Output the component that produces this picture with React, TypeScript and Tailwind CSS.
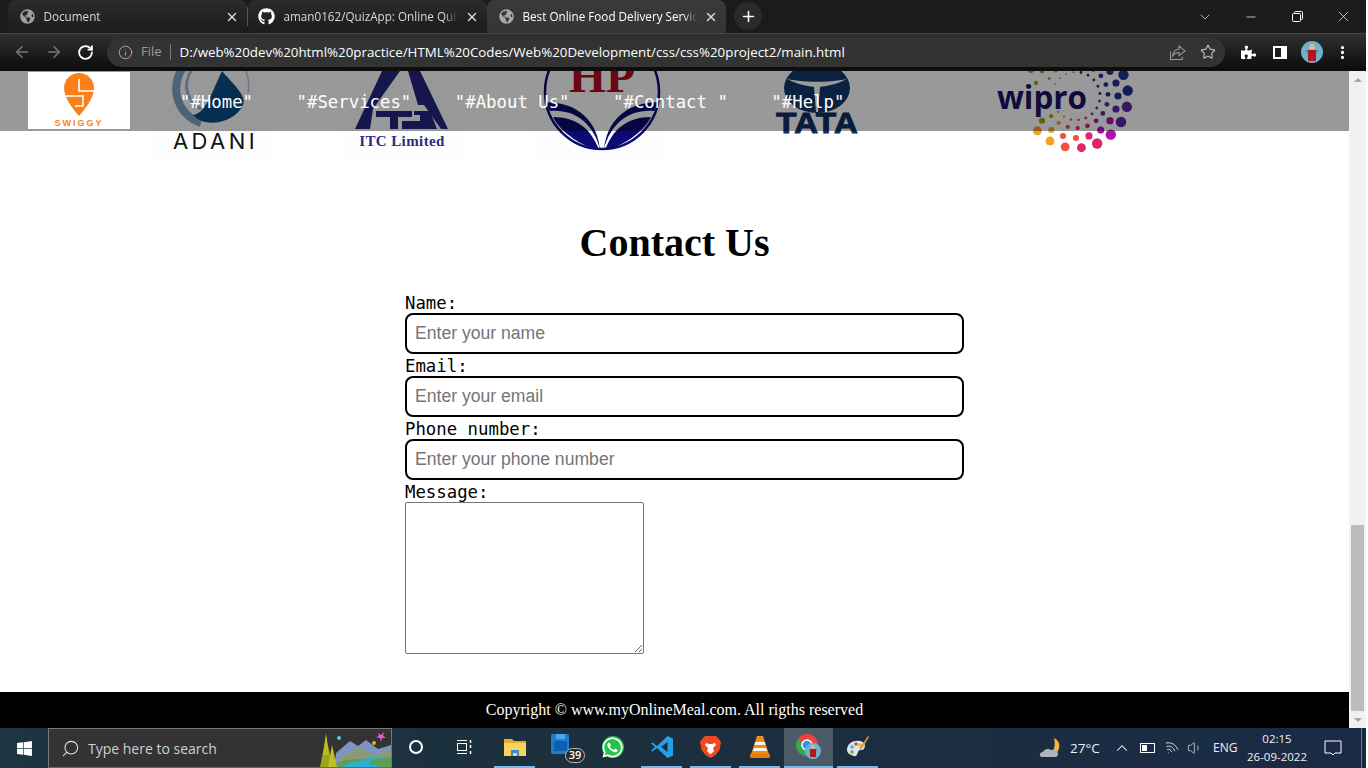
import { ArrowLeft, ArrowRight, RotateCw, Info, Star, X, Plus, ChevronDown, Minus, Search, ChevronUp, EllipsisVertical, Wifi, Volume1 } from "lucide-react";
import { FaGithub, FaGlobeAmericas, FaPuzzlePiece, FaWindows, FaWhatsapp } from "react-icons/fa";

const NAV_LINKS = ['"#Home"', '"#Services"', '"#About Us"', '"#Contact "', '"#Help"'];

const FIELDS = [
  { label: "Name:", placeholder: "Enter your name" },
  { label: "Email:", placeholder: "Enter your email" },
  { label: "Phone number:", placeholder: "Enter your phone number" },
];

function Tab({ title, icon, active }: { title: string; icon: React.ReactNode; active?: boolean }) {
  return (
    <div
      className={`flex h-[33px] w-[239px] items-center rounded-t-[8px] pl-[12px] pr-[8px] ${
        active ? "bg-gradient-to-b from-[#3a3a3a] to-[#343434] text-white" : "bg-gradient-to-b from-[#2b2b2b] to-[#1c1c1c] text-[#d8d8d8]"
      }`}
    >
      <span className="flex w-[23.500px] shrink-0 items-center">{icon}</span>
      <span className="flex-1 overflow-hidden whitespace-nowrap text-[11.700px] [mask-image:linear-gradient(to_right,black_92%,transparent)]">{title}</span>
      <X size={14} strokeWidth={2.4} className="ml-[7px] shrink-0 text-[#dcdcdc]" />
    </div>
  );
}

function BrowserChrome() {
  return (
    <header className="h-[71px] shrink-0 bg-[#0f0f0f] font-['Open_Sans',sans-serif]">
      <div className="flex h-[33px] items-end bg-[#1b1b1b] pl-[8px]">
        <Tab title="Document" icon={<FaGlobeAmericas size={15} className="text-[#a0a0a0]" />} />
        <div className="mb-[7px] h-[19px] w-px bg-[#555]" />
        <Tab title="aman0162/QuizApp: Online Quiz App" icon={<FaGithub size={17} className="-ml-[2px] text-white" />} />
        <Tab active title="Best Online Food Delivery Service in India" icon={<FaGlobeAmericas size={15} className="text-[#a8a8a8]" />} />
        <div className="mb-[3px] ml-[8px] flex h-[28px] w-[28px] items-center justify-center rounded-full bg-[#2a2a2a]">
          <Plus size={17} strokeWidth={2.2} className="text-white" />
        </div>
        <div className="flex-1" />
        <div className="mb-[8px] flex items-center text-white">
          <span className="flex w-[46px] justify-center"><ChevronDown size={16} strokeWidth={1} /></span>
          <span className="flex w-[46px] justify-center"><Minus size={14} strokeWidth={1.2} /></span>
          <span className="flex w-[46px] justify-center">
            <svg width="11" height="11" viewBox="0 0 11 11" fill="none" stroke="currentColor" strokeWidth="1">
              <rect x="0.5" y="2.5" width="8" height="8" rx="1" />
              <path d="M2.5 2.5V1.5a1 1 0 0 1 1-1h6a1 1 0 0 1 1 1v6a1 1 0 0 1-1 1h-1" />
            </svg>
          </span>
          <span className="flex w-[46px] justify-center"><X size={17} strokeWidth={1} /></span>
        </div>
      </div>
      <div className="flex h-[37px] items-center border-t border-[#454545] bg-gradient-to-b from-[#313131] to-[#0c0c0c] pl-[13px]">
        <ArrowLeft size={18} strokeWidth={2} className="text-[#777]" />
        <ArrowRight size={18} strokeWidth={2} className="ml-[14px] text-[#777]" />
        <RotateCw size={17} strokeWidth={2.6} className="ml-[14px] text-white" />
        <div className="ml-[13px] flex h-[29px] w-[1118px] items-center rounded-full bg-[#333333] pl-[11px] pr-[9px]">
          <Info size={15} strokeWidth={1.6} className="text-[#a8a8a8]" />
          <span className="ml-[8px] text-[13px] text-[#9a9a9a]">File</span>
          <div className="ml-[8px] h-[16px] w-px bg-[#777]" />
          <span className="ml-[9px] whitespace-nowrap text-[13.340px] text-white">D:/web%20dev%20html%20practice/HTML%20Codes/Web%20Development/css/css%20project2/main.html</span>
          <div className="flex-1" />
          <svg width="17" height="17" viewBox="0 0 16 16" fill="none" stroke="#9a9a9a" strokeWidth="1">
            <path d="M1.5 7v7.5h11V12" />
            <path d="M9.5 2v2.7C6 5 4 7.5 3.5 11 5.200 8.800 7 8 9.500 8v3L15 6.500z" />
          </svg>
          <Star size={16} strokeWidth={1.7} className="ml-[14px] text-[#bdbdbd]" />
        </div>
        <FaPuzzlePiece size={15} className="ml-[16px] text-white" />
        <div className="ml-[17px] h-[13px] w-[14px] border-[2px] border-r-[6px] border-white" />
        <svg width="22" height="22" viewBox="0 0 22 22" className="ml-[14px]">
          <circle cx="11" cy="11" r="11" fill="#6ab3c8" />
          <circle cx="11" cy="6" r="3" fill="#d8b8a0" />
          <path d="M5 10l3-1h6l3 1-2 1v9H7v-9z" fill="#b3161f" />
        </svg>
        <EllipsisVertical size={17} strokeWidth={2.6} className="ml-[11px] text-white" />
      </div>
    </header>
  );
}

function AdaniLogo() {
  return (
    <svg width="117" height="90" viewBox="0 0 117 90" className="shrink-0 bg-[#fdfdfd]">
      <path d="M32 -8 A 36 36 0 0 0 46 52" fill="none" stroke="#7ea6c9" strokeWidth="8" />
      <path d="M42 -6 A 26 26 0 0 0 46 38" fill="none" stroke="#9bbad6" strokeWidth="3" />
      <path d="M83 -12 A 38 38 0 0 1 93 22" fill="none" stroke="#b5c9da" strokeWidth="1.500" />
      <path d="M67 0 C 75 10 93 25 88 34 C 80 52 50 58 38 44 C 50 42 54 28 67 0Z" fill="#0c4c8a" />
      <text x="18" y="78" fontSize="22" letterSpacing="3.400" fill="#111" fontFamily="Inter, sans-serif">ADANI</text>
    </svg>
  );
}

function ItcLogo() {
  return (
    <svg width="124" height="90" viewBox="0 0 124 90" className="ml-[68px] shrink-0 bg-[#fdfefd]">
      <g fill="#232580">
        <path d="M42 0H60L33 38 30 58H15Z" />
        <path d="M68 0H80L108 58H101L84 34H78Z" />
        <path d="M36 40H72V46H58V58H50V46H36Z" />
        <path d="M62 50H80V44H74V40H90L97 58H62Z" />
      </g>
      <text x="62" y="75" textAnchor="middle" fontSize="15" fontWeight="700" letterSpacing="0.400" fill="#2c2b85" fontFamily="'Liberation Serif', serif">ITC Limited</text>
    </svg>
  );
}

function HpLogo() {
  return (
    <svg width="131" height="90" viewBox="0 0 131 90" className="ml-[69px] shrink-0 bg-[#fdfcff]">
      <circle cx="69" cy="21" r="57" fill="#fff" stroke="#0b0b73" strokeWidth="2.500" />
      <text x="69" y="21" textAnchor="middle" fontSize="46" fontWeight="700" textLength="66" lengthAdjust="spacingAndGlyphs" fill="#b10d1e" fontFamily="'Liberation Serif', serif">HP</text>
      <path d="M67 78 C 64 52 48 32 13 31 C 14 33 15 37 17 40 C 42 38 60 52 67 78Z" fill="#0b0b73" />
      <path d="M71 78 C 74 52 90 32 125 31 C 124 33 123 37 121 40 C 96 38 78 52 71 78Z" fill="#0b0b73" />
      <path d="M66 79 C 58 58 44 46 20 46 C 28 62 50 76 66 79Z" fill="#0b0b73" />
      <path d="M72 79 C 80 58 94 46 118 46 C 110 62 88 76 72 79Z" fill="#0b0b73" />
    </svg>
  );
}

function TataLogo() {
  return (
    <svg width="90" height="90" viewBox="0 0 90 90" className="ml-[106px] shrink-0">
      <ellipse cx="47" cy="17" rx="33" ry="25" fill="#12386e" />
      <path d="M15 7 C 28 14 38 15 44 16 L46 41 H48 L50 16 C 56 15 66 14 79 7 C 66 12 28 12 15 7Z" fill="#fff" />
      <text x="47" y="62" textAnchor="middle" fontSize="29" fontWeight="700" textLength="82" lengthAdjust="spacingAndGlyphs" stroke="#0d2f66" strokeWidth="0.800" fill="#0d2f66" fontFamily="'Liberation Sans', sans-serif">TATA</text>
    </svg>
  );
}

function dotColor(deg: number) {
  if (deg < -15) return "#79b13c";
  if (deg < 8) return "#1f9a8c";
  if (deg < 100) return "#1f3396";
  if (deg < 125) return "#5a2aa0";
  if (deg < 150) return "#b211b0";
  if (deg < 178) return "#e0246e";
  if (deg < 200) return "#f2513a";
  if (deg < 230) return "#f9a01d";
  return "#a8a01e";
}

const RINGS = [
  { r: 52, size: 5.2, shift: 0 },
  { r: 42, size: 3.6, shift: 6 },
  { r: 32, size: 2.4, shift: 3 },
  { r: 24, size: 1.4, shift: 0 },
];

function WiproLogo() {
  const dots = RINGS.flatMap((ring) =>
    Array.from({ length: 18 }, (_, i) => {
      const deg = -78 + ring.shift + i * 18;
      const rad = (deg * Math.PI) / 180;
      return { x: 86 + ring.r * Math.sin(rad), y: 25 - ring.r * Math.cos(rad), size: ring.size * (deg > 170 ? 0.85 : deg < 10 ? 0.6 : 1), fill: dotColor(deg) };
    })
  ).filter((d) => !(d.x < 98 && d.y > 13 && d.y < 41));
  return (
    <svg width="150" height="90" viewBox="0 0 150 90" className="ml-[130px] shrink-0">
      {dots.map((d, i) => (
        <circle key={i} cx={d.x} cy={d.y} r={d.size} fill={d.fill} />
      ))}
      <text x="7" y="38" fontSize="33" fontWeight="700" fill="#1c1166" textLength="90" lengthAdjust="spacingAndGlyphs" fontFamily="'Open Sans', sans-serif">wipro</text>
    </svg>
  );
}

function SwiggyLogo() {
  return (
    <div className="ml-[28px] -mt-[2px] flex h-[57px] w-[102px] shrink-0 flex-col items-center bg-white pt-[1px]">
      <svg width="30" height="44" viewBox="0 0 30 44">
        <path d="M15 0C6.700 0 0 6.700 0 15c0 10 9 21 15 28 6-7 15-18 15-28C30 6.700 23.300 0 15 0Z" fill="#fc8019" />
        <path d="M15 6V18H30M2 23H19V33H11" fill="none" stroke="#fff" strokeWidth="1.600" />
      </svg>
      <span className="mt-[1px] font-['Liberation_Sans',sans-serif] text-[9px] font-bold leading-[10px] tracking-[2px] text-[#fc8019]">SWIGGY</span>
    </div>
  );
}

function WebPage() {
  return (
    <main className="relative flex h-full min-w-0 flex-1 flex-col overflow-hidden bg-white">
      <div className="flex h-[90px] shrink-0 pl-[155px]">
        <AdaniLogo />
        <ItcLogo />
        <HpLogo />
        <TataLogo />
        <WiproLogo />
      </div>

      <nav className="absolute inset-x-0 top-0 flex h-[60px] items-center bg-black/40 font-['DejaVu_Sans_Mono',monospace] text-[17.330px] text-white">
        <SwiggyLogo />
        <div className="ml-[50px] flex gap-[43.500px] whitespace-pre pt-[3px]">
          {NAV_LINKS.map((link) => (
            <a key={link}>{link}</a>
          ))}
        </div>
      </nav>

      <h1 className="mt-[59px] text-center font-['Liberation_Serif',serif] text-[40px] font-bold leading-[46px] text-black">Contact Us</h1>

      <form className="mt-[27px] flex flex-1 flex-col pl-[405px] font-['DejaVu_Sans_Mono',monospace] text-[17.330px] leading-[20px] text-black">
        {FIELDS.map((field) => (
          <div key={field.label} className="mb-[2px]">
            <label className="block h-[20px]">{field.label}</label>
            <input
              placeholder={field.placeholder}
              className="block h-[41px] w-[559px] rounded-[8px] border-2 border-black bg-white px-[8px] font-['Liberation_Sans',sans-serif] text-[17.600px] placeholder:text-[#757575]"
            />
          </div>
        ))}
        <label className="block h-[20px]">Message:</label>
        <textarea className="block h-[152px] w-[239px] rounded-[2px] border border-[#767676] bg-white" />
      </form>

      <footer className="flex h-[36px] shrink-0 items-center justify-center bg-black font-['Liberation_Serif',serif] text-[16px] text-white">
        Copyright © www.myOnlineMeal.com. All rigths reserved
      </footer>
    </main>
  );
}

function Scrollbar() {
  return (
    <aside className="flex w-[17px] shrink-0 flex-col items-center bg-[#f1f1f1]">
      <div className="flex h-[17px] items-center justify-center">
        <div className="h-0 w-0 border-x-[4px] border-b-[4px] border-x-transparent border-b-[#a3a3a3]" />
      </div>
      <div className="flex-1" />
      <div className="h-[186px] w-[13px] bg-[#bcbcbc]" />
      <div className="flex h-[17px] items-center justify-center">
        <div className="h-0 w-0 border-x-[4px] border-t-[4px] border-x-transparent border-t-[#a3a3a3]" />
      </div>
    </aside>
  );
}

function SearchScene() {
  return (
    <svg width="77" height="38" viewBox="0 0 77 38" className="shrink-0">
      <path d="M22 24 L36 12 L44 17 L52 11 L64 20 L77 16 V38 H20Z" fill="#7e95c4" />
      <path d="M26 28 L44 18 L60 26 L77 20 V38 H26Z" fill="#8a9b7c" />
      <path d="M18 38 C 30 26 50 32 77 28 V38Z" fill="#5a9e5c" />
      <path d="M28 38 C 38 32 46 34 52 30 C 56 28 66 28 70 26 C 64 31 54 30 56 34 C 58 36 62 36 66 38Z" fill="#27b2d8" />
      <path d="M6 38 L12 8 L19 38Z" fill="#9aa51e" />
      <path d="M9 26 L12 4 L15 26Z" fill="#c2b91e" />
      <path d="M14 38 L18 16 L23 38Z" fill="#bfc023" />
      <circle cx="25" cy="9" r="2" fill="#4fd0e0" />
      <circle cx="60" cy="14" r="2" fill="#f5a623" />
      <path d="M64 4l3 2 3-3-1 4 3 2-4 0-1 4-1-4-4-1 3-1z" fill="#e85ce0" />
    </svg>
  );
}

function AppSlot({ children, running, active, narrow }: { children: React.ReactNode; running?: boolean; active?: boolean; narrow?: boolean }) {
  return (
    <div
      className={`relative flex h-[40px] shrink-0 items-center justify-center border-b-2 ${narrow ? "w-[48px]" : "w-[49px]"} ${
        active ? "border-[#76b9ed] bg-[#4b5a67]" : "border-transparent"
      }`}
    >
      {children}
      {running && !active && <span className="absolute inset-x-[4px] bottom-[-2px] h-[2px] bg-[#76b9ed]" />}
    </div>
  );
}

function Taskbar() {
  return (
    <footer className="flex h-[40px] shrink-0 items-center bg-gradient-to-r from-[#1c3540] via-[#1c2f3e] to-[#1a2a46] font-['Open_Sans',sans-serif] text-white">
      <div className="flex w-[48px] shrink-0 justify-center">
        <FaWindows size={17} />
      </div>
      <div className="flex h-[40px] w-[344px] shrink-0 items-center border border-[#777] border-b-[#666] bg-[#333333] pl-[12px]">
        <Search size={19} strokeWidth={1.3} className="-scale-x-100 text-[#e4e4e4]" />
        <span className="ml-[8px] flex-1 whitespace-nowrap text-[14px] text-[#d0d0d0]">Type here to search</span>
        <SearchScene />
      </div>
      <AppSlot narrow>
        <div className="h-[14px] w-[14px] rounded-full border-2 border-white" />
      </AppSlot>
      <AppSlot narrow>
        <svg width="16" height="16" viewBox="0 0 16 16" fill="none" stroke="#fff" strokeWidth="1">
          <path d="M1 1.500h10M1 14.500h10" />
          <rect x="1.500" y="4.500" width="9" height="7" />
          <path d="M14.500 1v3M14.500 6v3M14.500 12v3" strokeWidth="1.500" />
        </svg>
      </AppSlot>
      <div className="w-[2px] shrink-0" />
      <AppSlot running>
        <svg width="22" height="20" viewBox="0 0 22 20">
          <path d="M0 2h8l2 2h12v14H0z" fill="#e9a92e" />
          <path d="M0 6h22v13H0z" fill="#fbd35a" />
          <path d="M7 13h8v6h-2v-3H9v3H7z" fill="#2f8fd9" />
        </svg>
      </AppSlot>
      <AppSlot>
        <svg width="24" height="24" viewBox="0 0 24 24" className="-mt-[4px] -ml-[6px]">
          <rect x="2" y="1" width="18" height="20" rx="1.500" fill="#1f7cd0" />
          <rect x="7" y="1" width="9" height="5" fill="#4aa6ef" />
          <rect x="5" y="8" width="13" height="10" fill="#0e5fb0" />
        </svg>
        <span className="absolute bottom-[3px] left-[26px] flex h-[15px] w-[20px] items-center justify-center rounded-full border border-[#bbb] bg-[#2a2a2a] text-[11px] font-semibold">39</span>
      </AppSlot>
      <AppSlot>
        <span className="flex h-[22px] w-[22px] items-center justify-center rounded-full bg-[#27c24c]">
          <FaWhatsapp size={23} className="shrink-0 text-white" />
        </span>
      </AppSlot>
      <AppSlot running>
        <svg width="24" height="24" viewBox="0 0 24 24">
          <path d="M17.500 1 23 3.500v17L17.500 23 7 13l-4.500 3.500L1 15.500 5 12 1 8.500 2.500 7.500 7 11z" fill="#23a0e8" />
          <path d="M17.500 7 11 12l6.500 5z" fill="#1c2f3e" />
        </svg>
      </AppSlot>
      <AppSlot running>
        <svg width="21" height="24" viewBox="0 0 21 24">
          <path d="M5 1h11l3 3 2 3-1.500 8-4 5-5 3-5-3-4-5L0 7l2-3z" fill="#f1481f" />
          <path d="M6 8l3 1h3l3-1 1 2-3 3 1 3-3 3h-1l-3-3 1-3-3-3z" fill="#fff" />
        </svg>
      </AppSlot>
      <AppSlot running>
        <svg width="22" height="24" viewBox="0 0 22 24">
          <path d="M8 1h6l6 18H2z" fill="#f28a11" />
          <path d="M6.500 7h9l1 3h-11zM5 13h12l1 3H4z" fill="#f4f4f4" />
          <rect x="1" y="19" width="20" height="4" rx="1" fill="#e57a0e" />
        </svg>
      </AppSlot>
      <AppSlot running active>
        <svg width="26" height="26" viewBox="0 0 26 26" className="mt-[-1px]">
          <circle cx="11" cy="11" r="11" fill="#e8453c" />
          <path d="M11 11 1.500 5.500A11 11 0 0 0 11 22z" fill="#34a853" />
          <path d="M11 11h11a11 11 0 0 1-11 11z" fill="#fbbc05" />
          <circle cx="11" cy="11" r="5" fill="#4285f4" stroke="#fff" strokeWidth="1.500" />
          <circle cx="17" cy="17" r="8" fill="#6ab3c8" />
          <circle cx="17" cy="13" r="2" fill="#d8b8a0" />
          <path d="M13 16l2-1h4l2 1-1 1v6h-6v-6z" fill="#b3161f" />
        </svg>
      </AppSlot>
      <AppSlot running>
        <svg width="24" height="24" viewBox="0 0 24 24">
          <path d="M1 15C1 8 8 5 14 6c5 1 6 5 4 8-2 2-5 0-6 3-1 2-1 5-4 4-4-1-7-3-7-6Z" fill="#dfe7ea" />
          <circle cx="6" cy="12" r="1.800" fill="#3fb5d8" />
          <circle cx="10" cy="9" r="1.800" fill="#e0483c" />
          <circle cx="14" cy="10" r="1.800" fill="#f2b52f" />
          <circle cx="6" cy="17" r="1.800" fill="#62b34b" />
          <path d="M22 1l1 1-8 13-2-1z" fill="#d99a4a" />
        </svg>
      </AppSlot>
      <div className="flex-1" />

      <svg width="24" height="24" viewBox="0 0 24 24" className="shrink-0">
        <path d="M15 2c5 2 7 8 4 13-1 2-4 3-6 3-2-1 5-4 2-16Z" fill="#f4b63e" />
        <path d="M3 21c-3 0-3-5 1-5 1-3 6-4 8-2 3-1 7 0 7 4 0 2-1 3-3 3z" fill="#aeb4b8" />
      </svg>
      <span className="ml-[7px] w-[36px] text-[13.500px] text-[#f0f0f0]">27°C</span>
      <ChevronUp size={18} strokeWidth={1.4} className="ml-[7px] shrink-0" />
      <span className="ml-[9px] flex h-[10px] w-[15px] shrink-0 items-center border border-white p-[1px] pr-[7px]">
        <span className="h-full w-full bg-white" />
      </span>
      <Wifi size={16} strokeWidth={1.3} className="ml-[8px] shrink-0 rotate-[30deg] text-[#d8d8d8]" />
      <Volume1 size={16} strokeWidth={1.2} className="ml-[8px] shrink-0 text-[#d8d8d8]" />
      <span className="ml-[10px] w-[24px] text-[12px] text-[#f0f0f0]">ENG</span>
      <div className="ml-[8px] flex w-[64px] shrink-0 flex-col items-center text-[11.500px] leading-[18px] text-[#f0f0f0]">
        <span>02:15</span>
        <span className="whitespace-nowrap">26-09-2022</span>
      </div>
      <svg width="18" height="16" viewBox="0 0 18 16" fill="none" stroke="#fff" strokeWidth="1" className="ml-[15px] shrink-0">
        <path d="M1 1h16v12H11l-2 2-2-2H1z" />
      </svg>
      <div className="ml-[19px] h-full w-[5px] shrink-0 border-l border-[#6d7a88]" />
    </footer>
  );
}

export default function App() {
  return (
    <div className="h-[768px] w-[1368px] overflow-hidden bg-white">
      <div className="flex h-full w-[1366px] flex-col">
        <BrowserChrome />
        <div className="flex min-h-0 flex-1">
          <WebPage />
          <Scrollbar />
        </div>
        <Taskbar />
      </div>
    </div>
  );
}
